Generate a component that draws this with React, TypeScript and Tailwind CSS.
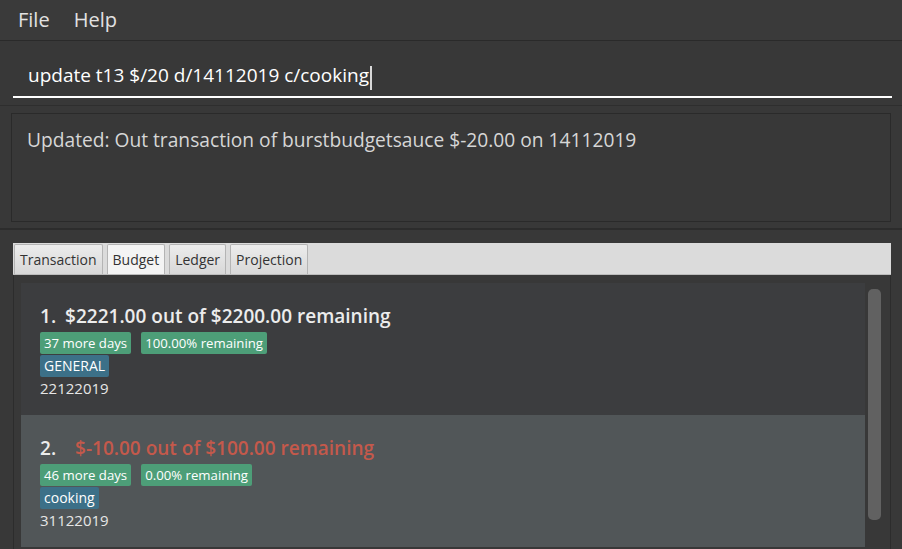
import React from 'react';

interface Budget {
  index: number;
  amount: string;
  negative: boolean;
  days: string;
  percent: string;
  category: string;
  date: string;
  selected: boolean;
}

const budgets: Budget[] = [
  {
    index: 1,
    amount: '$2221.00 out of $2200.00 remaining',
    negative: false,
    days: '37 more days',
    percent: '100.00% remaining',
    category: 'GENERAL',
    date: '22122019',
    selected: false,
  },
  {
    index: 2,
    amount: '$-10.00 out of $100.00 remaining',
    negative: true,
    days: '46 more days',
    percent: '0.00% remaining',
    category: 'cooking',
    date: '31122019',
    selected: true,
  },
];

const tabs = ['Transaction', 'Budget', 'Ledger', 'Projection'];

function BudgetCard({ budget }: { budget: Budget }) {
  return (
    <div className={`h-[132px] pl-[19px] pt-[21px] ${budget.selected ? 'bg-[#515658]' : 'bg-[#3c3d3f]'}`}>
      <div className="flex items-center h-[24px] text-[19px] font-semibold leading-none">
        <span className="text-[#ececec]">{budget.index}.</span>
        <span className={budget.negative ? 'ml-[19px] text-[#c4594b]' : 'ml-[9px] text-[#ececec]'}>{budget.amount}</span>
      </div>
      <div className="flex gap-[10px] mt-[4px]">
        <span className="h-[22px] px-[4px] rounded-[2px] bg-[#4d9e78] text-white text-[13.2px] leading-[22px]">{budget.days}</span>
        <span className="h-[22px] px-[4px] rounded-[2px] bg-[#4d9e78] text-white text-[13.2px] leading-[22px]">{budget.percent}</span>
      </div>
      <div className="flex mt-[1px]">
        <span className="h-[22px] px-[4px] rounded-[2px] bg-[#3c7088] text-white text-[14px] leading-[22px]">{budget.category}</span>
      </div>
      <div className="text-[15px] leading-[22px] text-[#e6e6e6]">{budget.date}</div>
    </div>
  );
}

export default function App() {
  return (
    <div className="w-[902px] h-[549px] overflow-hidden bg-[#383838] flex flex-col" style={{ fontFamily: '"Open Sans", "Noto Sans", sans-serif' }}>
      {/* menu bar */}
      <div className="h-[41px] shrink-0 flex items-center gap-[24px] pl-[18px] bg-[#3a3a3a] border-b border-[#2a2a2a] text-[20px] text-[#e2e2e2]">
        <span>File</span>
        <span>Help</span>
      </div>

      {/* command box */}
      <div className="h-[65px] shrink-0 pl-[13px] pr-[10px] border-b border-[#2e2e2e]">
        <div className="h-[57px] flex items-end pl-[15px] pb-[11px] border-b-2 border-white">
          <span className="text-[19px] text-white leading-none">update t13 $/20 d/14112019 c/cooking</span>
          <span className="w-[2px] h-[24px] bg-[#d8d8d8] ml-[1px] mb-[-5px]" />
        </div>
      </div>

      {/* result display */}
      <div className="h-[124px] shrink-0 px-[11px] pt-[7px] border-b-2 border-[#2c2c2c]">
        <div className="h-[109px] w-[880px] border border-[#2a2a2a] bg-[#383838] pl-[15px] pt-[12px] text-[19.2px] text-[#d6d6d6] leading-[28px]">
          Updated: Out transaction of burstbudgetsauce $-20.00 on 14112019
        </div>
      </div>

      {/* tab pane */}
      <div className="flex-1 pl-[13px] pt-[13px]">
        <div className="w-[878px] h-full flex flex-col">
          <div className="h-[32px] shrink-0 flex items-end gap-[4px] pl-[1px] pt-[1px] bg-[#dbdbdb] border-b border-[#bcbcbc]">
            {tabs.map(tab => (
              <div
                key={tab}
                className={`h-[30px] px-[5px] flex items-center text-[14px] text-[#333333] rounded-t-[2px] border border-b-0 border-[#b4b4b4] ${
                  tab === 'Budget' ? 'bg-[#f4f4f4]' : 'bg-gradient-to-b from-[#ececec] to-[#d8d8d8]'
                }`}
              >
                {tab}
              </div>
            ))}
          </div>
          <div className="flex-1 flex border-l border-r border-[#2c2c2c] bg-[#383838]">
            <div className="flex-1 pl-[7px] pt-[8px] flex flex-col">
              {budgets.map(b => (
                <BudgetCard key={b.index} budget={b} />
              ))}
            </div>
            <div className="w-[25px] shrink-0 pt-[14px] pl-[3px]">
              <div className="w-[13px] h-[231px] rounded-[5px] bg-[#616161]" />
            </div>
          </div>
        </div>
      </div>
    </div>
  );
}
